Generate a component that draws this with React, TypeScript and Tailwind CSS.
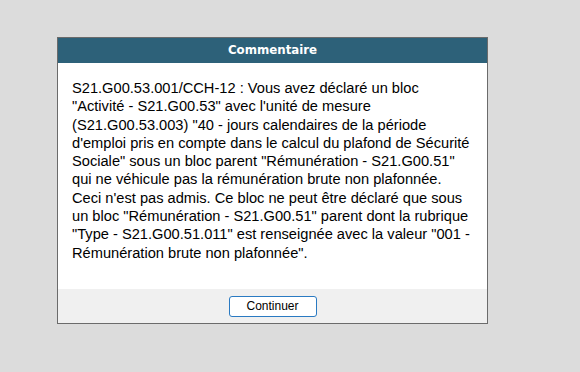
export default function App() {
  const lines = [
    'S21.G00.53.001/CCH-12 : Vous avez déclaré un bloc',
    '"Activité - S21.G00.53" avec l\'unité de mesure',
    '(S21.G00.53.003) "40 - jours calendaires de la période',
    'd\'emploi pris en compte dans le calcul du plafond de Sécurité',
    'Sociale" sous un bloc parent "Rémunération - S21.G00.51"',
    'qui ne véhicule pas la rémunération brute non plafonnée.',
    'Ceci n\'est pas admis. Ce bloc ne peut être déclaré que sous',
    'un bloc "Rémunération - S21.G00.51" parent dont la rubrique',
    '"Type - S21.G00.51.011" est renseignée avec la valeur "001 -',
    'Rémunération brute non plafonnée".',
  ];
  return (
    <div className="w-[580px] h-[372px] bg-[#dcdcdc] pt-[37px] pl-[57px]">
      <div className="w-[431px] h-[287px] border border-[#6b6b6b] bg-white flex flex-col">
        <div className="h-[25px] bg-[#2d6179] flex items-center justify-center text-white font-bold text-[11.8px] [font-family:'DejaVu_Sans',sans-serif]">
          Commentaire
        </div>
        <div className="flex-1 px-[14px] pt-[16px] text-[14.65px] leading-[18.3px] text-black whitespace-nowrap [font-family:'Liberation_Sans',Arial,sans-serif]">
          {lines.map((l, i) => (
            <div key={i}>{l}</div>
          ))}
        </div>
        <div className="h-[34px] bg-[#f0f0f0] flex items-center justify-center">
          <button className="w-[88px] h-[21px] rounded-[3px] border border-[#2a7ac2] bg-white text-[12px] text-black [font-family:'Liberation_Sans',Arial,sans-serif]">
            Continuer
          </button>
        </div>
      </div>
    </div>
  );
}
